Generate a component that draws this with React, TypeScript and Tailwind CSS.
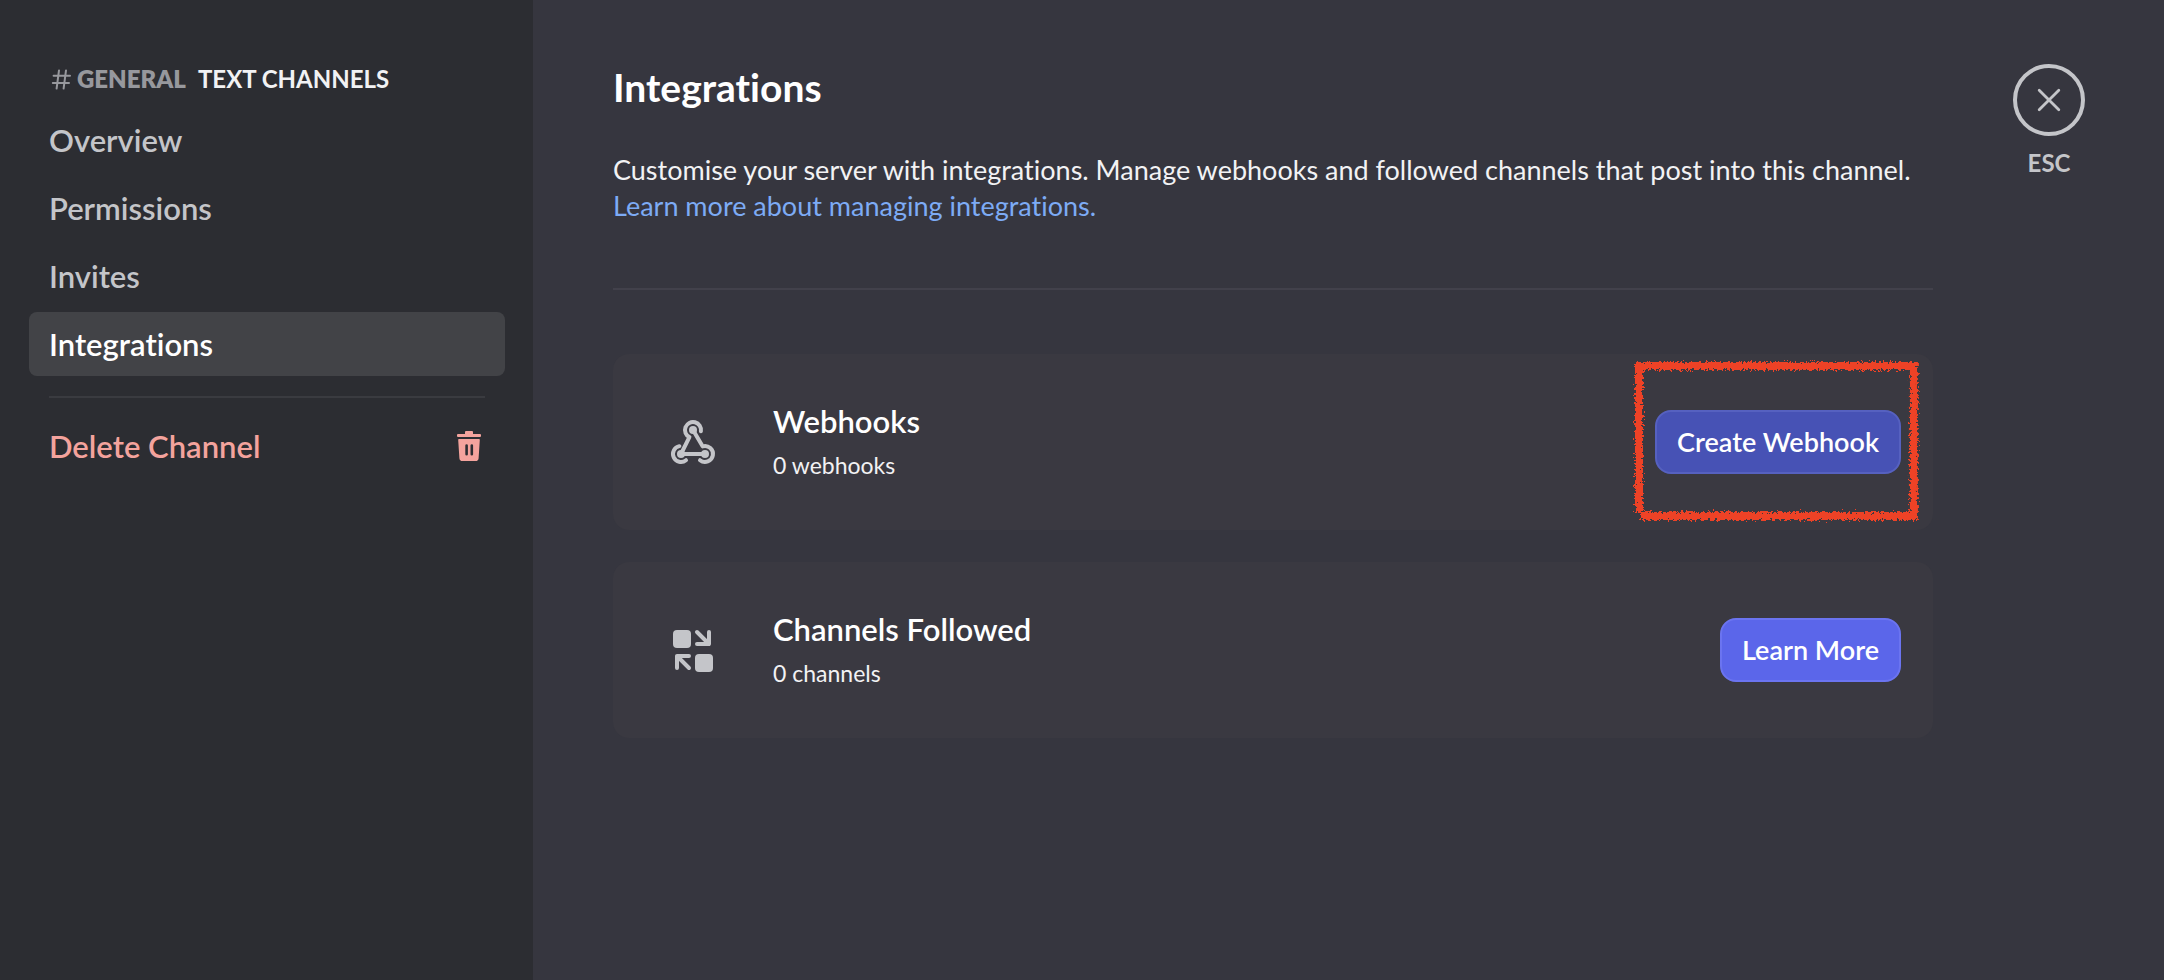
import type { ReactNode } from 'react';

const navItems = [
  { label: 'Overview', active: false },
  { label: 'Permissions', active: false },
  { label: 'Invites', active: false },
  { label: 'Integrations', active: true },
];

function HashIcon() {
  return (
    <svg className="size-6 shrink-0" viewBox="0 0 24 24" fill="none" stroke="currentColor" strokeWidth="2" strokeLinecap="round" aria-hidden="true">
      <path d="M10 3.4 7.6 21.6M17 3.4 14.6 21.6M4.6 8.8H21M3.8 16H20" />
    </svg>
  );
}

function TrashIcon() {
  return (
    <svg className="size-8 shrink-0" viewBox="0 0 32 32" fill="currentColor" aria-hidden="true">
      <path d="M12 4V2a1 1 0 0 1 1-1h6a1 1 0 0 1 1 1v2h7a1 1 0 0 1 1 1v1a1 1 0 0 1-1 1H5a1 1 0 0 1-1-1V5a1 1 0 0 1 1-1z" />
      <path
        fillRule="evenodd"
        d="M6 9h20a.8.8 0 0 1 .8.9l-1.2 18.3A3 3 0 0 1 22.6 31H9.4a3 3 0 0 1-3-2.8L5.2 9.9A.8.8 0 0 1 6 9zm7.6 5.2a1.3 1.3 0 0 0-1.3 1.3v8.8a1.3 1.3 0 0 0 2.6 0v-8.8a1.3 1.3 0 0 0-1.3-1.3zm5.2 0a1.3 1.3 0 0 0-1.3 1.3v8.8a1.3 1.3 0 0 0 2.6 0v-8.8a1.3 1.3 0 0 0-1.3-1.3z"
      />
    </svg>
  );
}

function WebhookIcon() {
  return (
    <svg className="size-12 shrink-0" viewBox="0 0 24 24" fill="none" stroke="currentColor" strokeWidth="2" strokeLinecap="round" strokeLinejoin="round" aria-hidden="true">
      <path d="M15.95 6.6A4 4 0 1 0 10.2 9.58L6 18" />
      <path d="M12 6 16.8 14.18A4 4 0 1 1 15.5 21.12" />
      <path d="M18 18H6" />
      <path d="M5.2 14.08A4 4 0 1 0 8.5 21.12" />
      <g fill="currentColor" stroke="none">
        <circle cx="12" cy="6" r="2" />
        <circle cx="6" cy="18" r="2" />
        <circle cx="18" cy="18" r="2" />
      </g>
    </svg>
  );
}

function ChannelsIcon() {
  return (
    <svg className="size-12 shrink-0" viewBox="0 0 24 24" fill="currentColor" aria-hidden="true">
      <rect x="2" y="2" width="9" height="9" rx="2" />
      <rect x="13" y="14" width="9" height="9" rx="2" />
      <path fill="none" stroke="currentColor" strokeWidth="2" strokeLinecap="round" strokeLinejoin="round" d="M14 3l6 6M20 3v6h-6M10 21l-6-6M4 21v-6h6" />
    </svg>
  );
}

function CloseIcon() {
  return (
    <svg className="size-6" viewBox="0 0 24 24" fill="none" stroke="currentColor" strokeWidth="2.8" strokeLinecap="round" aria-hidden="true">
      <path d="M2.2 2.2 21.8 21.8M21.8 2.2 2.2 21.8" />
    </svg>
  );
}

/* Hand-drawn marker frame laid over the highlighted button. */
function MarkerFrame() {
  return (
    <svg
      className="pointer-events-none absolute -inset-x-5 -inset-y-12 h-40 w-[calc(100%+40px)] overflow-visible text-[#ee4226]"
      viewBox="0 0 286 160"
      preserveAspectRatio="none"
      aria-hidden="true"
    >
      <defs>
        <filter id="chalk" x="-5%" y="-5%" width="110%" height="110%">
          <feTurbulence type="fractalNoise" baseFrequency="0.45" numOctaves="3" seed="7" result="noise" />
          <feDisplacementMap in="SourceGraphic" in2="noise" scale="8" xChannelSelector="R" yChannelSelector="G" />
        </filter>
      </defs>
      <path d="M0 4H279V154H6M4 4V151" fill="none" stroke="currentColor" strokeWidth="8" filter="url(#chalk)" />
    </svg>
  );
}

function IntegrationCard({ icon, title, detail, action }: { icon: ReactNode; title: string; detail: string; action: ReactNode }) {
  return (
    <section className="flex h-44 items-center rounded-2xl bg-[#3a3941] pr-8 pl-14">
      <span className="text-[#c4c5c9]">{icon}</span>
      <div className="ml-14 min-w-0 flex-1 pb-1">
        <h2 className="text-[31px] leading-10 font-semibold text-white">{title}</h2>
        <p className="mt-2.5 text-[23px] leading-7 text-[#f2f2f4]">{detail}</p>
      </div>
      {action}
    </section>
  );
}

export default function App() {
  return (
    <div className="flex min-h-screen bg-[#36363f] font-['Lato','Open_Sans',sans-serif] [font-variant-ligatures:none]">
      <aside className="w-[533px] shrink-0 bg-[#2c2d32] pt-15 pr-7 pl-[29px]">
        <div className="mb-2.5 flex h-[38px] items-center px-5 text-2xl font-bold text-[#f2f2f4] uppercase">
          <span className="flex items-center gap-1 font-extrabold text-[#97989d]">
            <HashIcon />
            General
          </span>
          <span className="ml-3">Text channels</span>
        </div>
        <nav className="flex flex-col gap-1">
          {navItems.map(({ label, active }) => (
            <a
              key={label}
              href="#"
              aria-current={active ? 'page' : undefined}
              className={
                active
                  ? 'flex h-16 items-center rounded-lg bg-[#424347] px-5 text-[31px] font-semibold text-white'
                  : 'flex h-16 items-center rounded-lg px-5 text-[31px] font-semibold text-[#c4c5c9]'
              }
            >
              {label}
            </a>
          ))}
        </nav>
        <hr className="mx-5 mt-5 mb-4 border-t-2 border-[#3a3b40]" />
        <button type="button" className="flex h-16 w-full items-center justify-between px-5 text-[31px] font-semibold text-[#f4a39d]">
          Delete Channel
          <TrashIcon />
        </button>
      </aside>

      <main className="flex min-w-0 flex-1 items-start gap-20 pt-16 pr-[79px] pl-20">
        <div className="min-w-0 flex-1">
          <h1 className="text-[39px] leading-[46px] font-bold text-white">Integrations</h1>
          <p className="mt-[42px] text-[27px] leading-9 text-[#f2f2f4]">
            Customise your server with integrations. Manage webhooks and followed channels that post into this channel.{' '}
            <a href="#" className="block text-[#7dabf5]">
              Learn more about managing integrations.
            </a>
          </p>
          <hr className="my-16 border-t-2 border-[#42414b]" />
          <div className="flex flex-col gap-8">
            <IntegrationCard
              icon={<WebhookIcon />}
              title="Webhooks"
              detail="0 webhooks"
              action={
                <div className="relative">
                  <button type="button" className="h-16 rounded-2xl border-2 border-[#5661c0] bg-[#4752b5] px-5 text-[27px] font-semibold text-white">
                    Create Webhook
                  </button>
                  <MarkerFrame />
                </div>
              }
            />
            <IntegrationCard
              icon={<ChannelsIcon />}
              title="Channels Followed"
              detail="0 channels"
              action={
                <button type="button" className="h-16 rounded-2xl border-2 border-[#6b74f0] bg-[#5b66ea] px-5 text-[27px] font-semibold text-white">
                  Learn More
                </button>
              }
            />
          </div>
        </div>
        <button type="button" aria-label="Close (ESC)" className="flex flex-col items-center gap-3 text-[#c4c5c9]">
          <span className="flex size-18 items-center justify-center rounded-full border-4 border-current">
            <CloseIcon />
          </span>
          <span className="text-2xl leading-[30px] font-bold">ESC</span>
        </button>
      </main>
    </div>
  );
}
